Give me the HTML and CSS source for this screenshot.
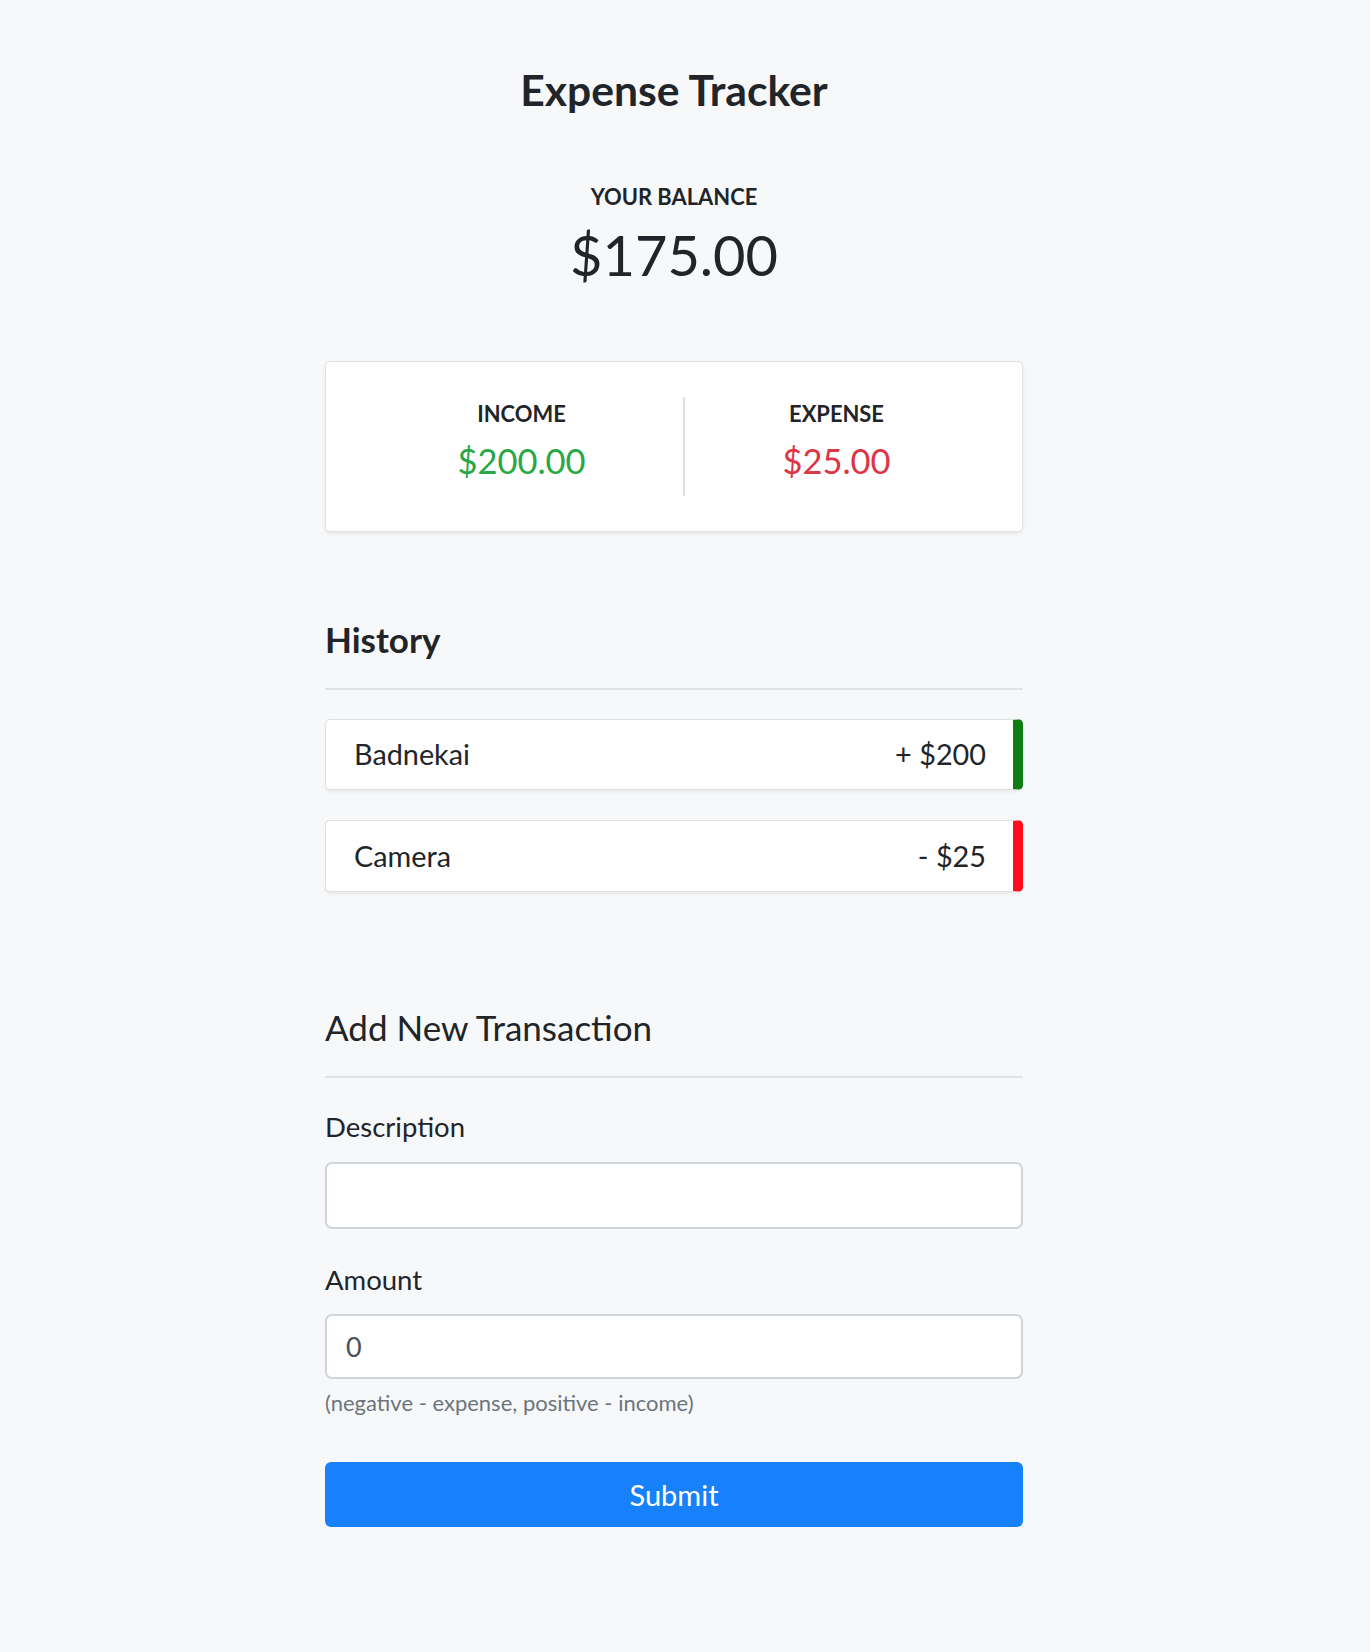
FILE: index.html
```html
<!DOCTYPE html>
<html lang="en">
<head>
<meta charset="UTF-8">
<title>Expense Tracker</title>
<link rel="stylesheet" href="styles.css">
</head>
<body>
  <div class="container">
    <h2 class="title">Expense Tracker</h2>

    <div class="balance">
      <h4 class="balance-label">YOUR BALANCE</h4>
      <h1 class="balance-value">$175.00</h1>
    </div>

    <div class="inc-exp">
      <div class="inc-exp-col inc-col">
        <h4 class="inc-exp-label">INCOME</h4>
        <p class="money money-plus">$200.00</p>
      </div>
      <div class="inc-exp-col">
        <h4 class="inc-exp-label">EXPENSE</h4>
        <p class="money money-minus">$25.00</p>
      </div>
    </div>

    <h3 class="section-title section-bold">History</h3>
    <ul class="list">
      <li class="item item-plus"><span>Badnekai</span><span>+ $200</span></li>
      <li class="item item-minus"><span>Camera</span><span>- $25</span></li>
    </ul>

    <h3 class="section-title section-add">Add New Transaction</h3>
    <form class="form">
      <div class="form-control">
        <label class="label label-desc" for="text">Description</label>
        <input class="input input-desc" type="text" id="text">
      </div>
      <div class="form-control">
        <label class="label label-amount" for="amount">Amount</label>
        <input class="input input-amount" type="number" id="amount" value="0">
        <p class="hint">(negative - expense, positive - income)</p>
      </div>
      <button class="btn" type="button">Submit</button>
    </form>
  </div>
</body>
</html>
```

FILE: styles.css
```css
* {
  box-sizing: border-box;
}

html, body {
  margin: 0;
  background: #f7f8fa;
}

body {
  font-family: Lato, "Open Sans", "Liberation Sans", sans-serif;
  color: #212529;
  padding: 63.5px 22px 0 0;
  line-height: 1.2;
}

.container {
  width: 698px;
  margin: 0 auto;
}

.title {
  margin: 0;
  text-align: center;
  font-size: 42.6px;
  font-weight: 700;
  line-height: 1.2;
}

.balance {
  text-align: center;
}

.balance-label {
  margin: 69.4px 0 0;
  font-size: 21.9px;
  font-weight: 700;
  line-height: 1.2;
}

.balance-value {
  margin: 10.4px 0 0;
  font-size: 56px;
  font-weight: 400;
  line-height: 1.2;
}

.inc-exp {
  margin-top: 72.8px;
  display: flex;
  background: #fff;
  border: 1px solid #e1e1e1;
  border-radius: 5px;
  box-shadow: 0 2px 4px rgba(0, 0, 0, 0.07);
  padding: 35px 34px;
}

.inc-exp-col {
  flex: 1 1 auto;
  text-align: center;
}

.inc-col {
  border-right: 2px solid #dedede;
}

.inc-exp-label {
  margin: 4px 0 0;
  font-size: 21.9px;
  font-weight: 700;
  line-height: 1.2;
}

.money {
  margin: 13px 0 15px;
  font-size: 34.5px;
  line-height: 1.2;
}

.money-plus {
  color: #28a745;
}

.money-minus {
  color: #dc3545;
}

.section-title {
  margin: 0;
  font-size: 35px;
  line-height: 1.2;
  font-weight: 400;
  border-bottom: 2px solid #e1e3e6;
}

.section-bold {
  font-weight: 700;
  margin-top: 86.1px;
  padding-bottom: 27.2px;
}

.section-add {
  margin-top: 114px;
  padding-bottom: 27.5px;
}

.list {
  list-style: none;
  margin: 29px 0 0;
  padding: 0;
}

.item {
  display: flex;
  justify-content: space-between;
  align-items: center;
  background: #fff;
  border: 1px solid #e0e0e0;
  border-radius: 5px;
  box-shadow: 0 2px 3px rgba(0, 0, 0, 0.06);
  padding: 17.6px 27px 17.6px 28px;
  font-size: 28.8px;
  line-height: 1.2;
}

.item + .item {
  margin-top: 30px;
}

.item-plus {
  border-right: 10px solid #0e7e12;
}

.item-minus {
  border-right: 10px solid #ff0d1d;
}

.form {
  margin: 0;
}

.label {
  display: block;
  font-size: 27.5px;
  line-height: 1.2;
}

.label-desc {
  margin-top: 32.9px;
}

.label-amount {
  margin-top: 34px;
}

.input {
  display: block;
  width: 100%;
  margin-top: 18.5px;
  border: 2px solid #ced4da;
  border-radius: 7px;
  background: #fff;
  font-family: Lato, "Open Sans", "Liberation Sans", sans-serif;
  font-size: 27px;
  color: #495057;
  padding: 0 19px;
  outline: none;
}

.input-desc {
  height: 66.6px;
}

.input-amount {
  height: 64.7px;
  -moz-appearance: textfield;
}

.input-amount::-webkit-outer-spin-button,
.input-amount::-webkit-inner-spin-button {
  -webkit-appearance: none;
  margin: 0;
}

.hint {
  margin: 11px 0 0;
  font-size: 22px;
  line-height: 1.2;
  color: #6c757d;
}

.btn {
  display: block;
  width: 100%;
  height: 65.7px;
  margin-top: 45.6px;
  border: none;
  border-radius: 6px;
  background: #1780fb;
  color: #fff;
  font-family: Lato, "Open Sans", "Liberation Sans", sans-serif;
  font-size: 29px;
  cursor: pointer;
}
```
